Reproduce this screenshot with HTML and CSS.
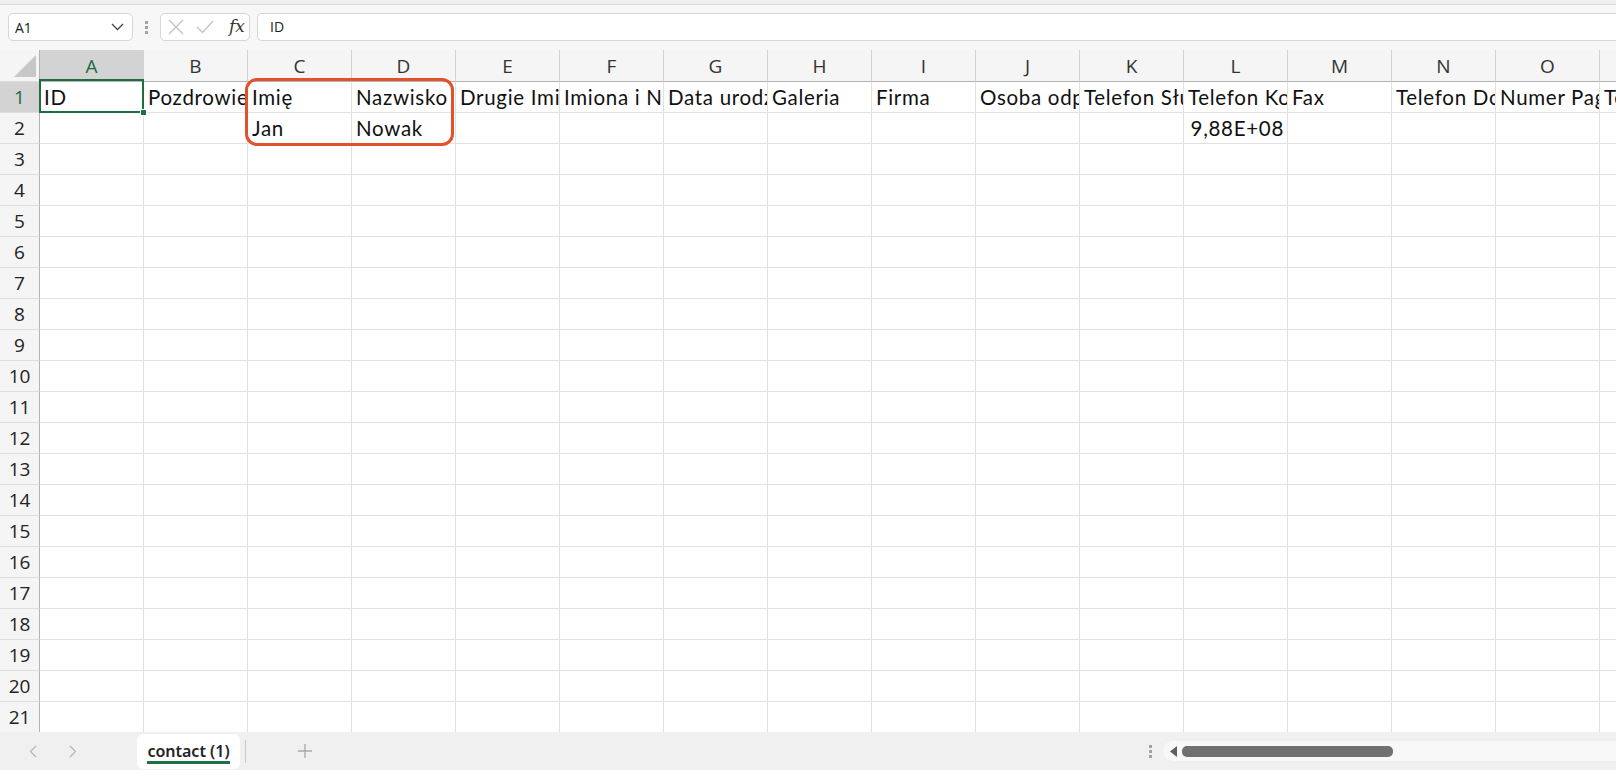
FILE: index.html
```html
<!DOCTYPE html>
<html lang="pl">
<head>
  <meta charset="UTF-8" />
  <title>contact (1)</title>
  <link rel="stylesheet" href="styles.css">
</head>
<body>
  <div class="app">
    <div class="top-strip"></div>

    <!-- Formula bar -->
    <div class="formula-row">
      <div class="name-box">
        <span>A1</span>
        <svg width="13" height="8" viewBox="0 0 13 8"><path d="M1 1l5.5 5.5L12 1" fill="none" stroke="#444" stroke-width="1.3"/></svg>
      </div>
      <div class="grip"><i></i><i></i><i></i></div>
      <div class="fx-buttons">
        <svg width="16" height="16" viewBox="0 0 16 16"><path d="M1 1l14 14M15 1L1 15" stroke="#c4c4c4" stroke-width="1.4"/></svg>
        <svg width="18" height="14" viewBox="0 0 18 14"><path d="M1 7l5.5 5.5L17 1" fill="none" stroke="#c4c4c4" stroke-width="1.4"/></svg>
        <span class="fx">fx</span>
      </div>
      <div class="formula-input">ID</div>
    </div>

    <!-- Grid -->
    <div class="sheet">
      <table class="grid">
        <colgroup>
          <col class="rh"><col><col><col><col><col><col><col><col><col><col><col><col><col><col><col><col>
        </colgroup>
        <tr class="col-heads">
          <th class="corner"><span class="tri"></span></th>
          <th class="active">A</th><th>B</th><th>C</th><th>D</th><th>E</th><th>F</th><th>G</th><th>H</th>
          <th>I</th><th>J</th><th>K</th><th>L</th><th>M</th><th>N</th><th>O</th><th>P</th>
        </tr>
        <tr>
          <th class="active">1</th>
          <td>ID</td><td>Pozdrowienie</td><td>Imię</td><td>Nazwisko</td><td>Drugie Imię</td>
          <td>Imiona i Nazwisko</td><td>Data urodzenia</td><td>Galeria</td><td>Firma</td>
          <td>Osoba odpowiedzialna</td><td>Telefon Służbowy</td><td>Telefon Komórkowy</td><td>Fax</td>
          <td>Telefon Domowy</td><td>Numer Pagera</td><td>Telefon</td>
        </tr>
        <tr>
          <th>2</th>
          <td></td><td></td><td>Jan</td><td>Nowak</td><td></td><td></td><td></td><td></td><td></td>
          <td></td><td></td><td class="num">9,88E+08</td><td></td><td></td><td></td><td></td>
        </tr>
        <tr><th>3</th><td></td><td></td><td></td><td></td><td></td><td></td><td></td><td></td><td></td><td></td><td></td><td></td><td></td><td></td><td></td><td></td></tr>
        <tr><th>4</th><td></td><td></td><td></td><td></td><td></td><td></td><td></td><td></td><td></td><td></td><td></td><td></td><td></td><td></td><td></td><td></td></tr>
        <tr><th>5</th><td></td><td></td><td></td><td></td><td></td><td></td><td></td><td></td><td></td><td></td><td></td><td></td><td></td><td></td><td></td><td></td></tr>
        <tr><th>6</th><td></td><td></td><td></td><td></td><td></td><td></td><td></td><td></td><td></td><td></td><td></td><td></td><td></td><td></td><td></td><td></td></tr>
        <tr><th>7</th><td></td><td></td><td></td><td></td><td></td><td></td><td></td><td></td><td></td><td></td><td></td><td></td><td></td><td></td><td></td><td></td></tr>
        <tr><th>8</th><td></td><td></td><td></td><td></td><td></td><td></td><td></td><td></td><td></td><td></td><td></td><td></td><td></td><td></td><td></td><td></td></tr>
        <tr><th>9</th><td></td><td></td><td></td><td></td><td></td><td></td><td></td><td></td><td></td><td></td><td></td><td></td><td></td><td></td><td></td><td></td></tr>
        <tr><th>10</th><td></td><td></td><td></td><td></td><td></td><td></td><td></td><td></td><td></td><td></td><td></td><td></td><td></td><td></td><td></td><td></td></tr>
        <tr><th>11</th><td></td><td></td><td></td><td></td><td></td><td></td><td></td><td></td><td></td><td></td><td></td><td></td><td></td><td></td><td></td><td></td></tr>
        <tr><th>12</th><td></td><td></td><td></td><td></td><td></td><td></td><td></td><td></td><td></td><td></td><td></td><td></td><td></td><td></td><td></td><td></td></tr>
        <tr><th>13</th><td></td><td></td><td></td><td></td><td></td><td></td><td></td><td></td><td></td><td></td><td></td><td></td><td></td><td></td><td></td><td></td></tr>
        <tr><th>14</th><td></td><td></td><td></td><td></td><td></td><td></td><td></td><td></td><td></td><td></td><td></td><td></td><td></td><td></td><td></td><td></td></tr>
        <tr><th>15</th><td></td><td></td><td></td><td></td><td></td><td></td><td></td><td></td><td></td><td></td><td></td><td></td><td></td><td></td><td></td><td></td></tr>
        <tr><th>16</th><td></td><td></td><td></td><td></td><td></td><td></td><td></td><td></td><td></td><td></td><td></td><td></td><td></td><td></td><td></td><td></td></tr>
        <tr><th>17</th><td></td><td></td><td></td><td></td><td></td><td></td><td></td><td></td><td></td><td></td><td></td><td></td><td></td><td></td><td></td><td></td></tr>
        <tr><th>18</th><td></td><td></td><td></td><td></td><td></td><td></td><td></td><td></td><td></td><td></td><td></td><td></td><td></td><td></td><td></td><td></td></tr>
        <tr><th>19</th><td></td><td></td><td></td><td></td><td></td><td></td><td></td><td></td><td></td><td></td><td></td><td></td><td></td><td></td><td></td><td></td></tr>
        <tr><th>20</th><td></td><td></td><td></td><td></td><td></td><td></td><td></td><td></td><td></td><td></td><td></td><td></td><td></td><td></td><td></td><td></td></tr>
        <tr><th>21</th><td></td><td></td><td></td><td></td><td></td><td></td><td></td><td></td><td></td><td></td><td></td><td></td><td></td><td></td><td></td><td></td></tr>
      </table>

      <!-- overlays: active cell and the annotation frame -->
      <div class="selection"><span class="handle"></span></div>
      <div class="callout"></div>
    </div>

    <!-- Sheet tabs + horizontal scroll -->
    <div class="tab-bar">
      <div class="tab-nav">
        <svg width="8" height="13" viewBox="0 0 8 13"><path d="M7 1L1.5 6.5 7 12" fill="none" stroke="#b5b5b5" stroke-width="1.2"/></svg>
        <svg width="8" height="13" viewBox="0 0 8 13"><path d="M1 1l5.5 5.5L1 12" fill="none" stroke="#b5b5b5" stroke-width="1.2"/></svg>
      </div>
      <div class="sheet-tab"><span>contact (1)</span></div>
      <div class="tab-sep"></div>
      <div class="add-sheet">
        <svg width="16" height="16" viewBox="0 0 16 16"><path d="M8 1v14M1 8h14" stroke="#a8a8a8" stroke-width="1.3"/></svg>
      </div>
      <div class="hscroll">
        <div class="grip small"><i></i><i></i><i></i></div>
        <div class="track">
          <svg width="8" height="11" viewBox="0 0 8 11"><path d="M7 0v11L0 5.5z" fill="#5f5f5f"/></svg>
          <div class="thumb"></div>
        </div>
      </div>
    </div>
  </div>
</body>
</html>
```

FILE: styles.css
```css
/* Base */
* {
  margin: 0;
  padding: 0;
  box-sizing: border-box;
}

body {
  font-family: "Open Sans", "Noto Sans", sans-serif;
  color: #222;
  background: #f5f5f5;
  overflow: hidden;
}

.app {
  width: 1616px;
  height: 770px;
  display: flex;
  flex-direction: column;
  overflow: hidden;
}

.top-strip {
  height: 5px;
  background: #efefef;
  border-bottom: 1px solid #d9d9d9;
}

/* Formula bar */
.formula-row {
  height: 45px;
  display: flex;
  align-items: flex-start;
  padding: 8px 0 0 8px;
  background: #f7f7f7;
}

.name-box {
  width: 125px;
  height: 28px;
  background: #fff;
  border: 1px solid #d6d6d6;
  border-radius: 5px;
  display: flex;
  align-items: center;
  justify-content: space-between;
  padding: 0 8px 0 6px;
  font-size: 14px;
}

.grip {
  width: 27px;
  height: 28px;
  display: flex;
  flex-direction: column;
  align-items: center;
  justify-content: center;
  gap: 2px;
}
.grip i {
  width: 3px;
  height: 3px;
  background: #a3a3a3;
}

.fx-buttons {
  width: 90px;
  height: 28px;
  background: #fff;
  border: 1px solid #d6d6d6;
  border-radius: 5px;
  display: flex;
  align-items: center;
  padding-left: 7px;
  gap: 12px;
}

.fx {
  font-family: "DejaVu Serif", "Liberation Serif", serif;
  font-style: italic;
  font-size: 17px;
  color: #333;
  margin-left: 3px;
  margin-top: -3px;
}

.formula-input {
  flex: 1;
  height: 28px;
  margin-left: 7px;
  background: #fff;
  border: 1px solid #d6d6d6;
  border-right: none;
  border-radius: 5px 0 0 5px;
  padding-left: 12px;
  font-size: 14px;
  line-height: 26px;
}

/* Grid */
.sheet {
  position: relative;
  height: 682px;
  overflow: hidden;
  background: #fff;
}

.grid {
  table-layout: fixed;
  width: 1704px;
  border-collapse: separate;
  border-spacing: 0;
}

.grid col {
  width: 104px;
}
.grid col.rh {
  width: 40px;
}

.grid tr {
  height: 31px;
}

.grid td,
.grid th {
  border-right: 1px solid #e1e1e1;
  border-bottom: 1px solid #e1e1e1;
  white-space: nowrap;
  overflow: hidden;
  font-size: 19px;
  line-height: 30px;
  font-weight: 400;
}

.grid td {
  font-family: Lato, "Open Sans", sans-serif;
  font-size: 20.5px;
  letter-spacing: 0.7px;
  color: #111;
  padding-left: 4px;
  text-align: left;
}

.grid td.num {
  text-align: right;
  padding-right: 3px;
}

.col-heads th {
  background: #f5f5f5;
  color: #333;
  text-align: center;
  border-right-color: #d2d2d2;
  border-bottom-color: #b3b3b3;
  padding-top: 1px;
}

.grid tr > th:first-child {
  background: #f5f5f5;
  color: #222;
  text-align: center;
  border-right-color: #b3b3b3;
  border-bottom-color: #dedede;
}

.grid th.active,
.grid tr > th.active:first-child {
  background: #d3d3d3;
  color: #1d6b3f;
}

.corner {
  position: relative;
}
.tri {
  position: absolute;
  left: 14px;
  top: 5px;
  width: 0;
  height: 0;
  border-left: 22px solid transparent;
  border-bottom: 22px solid #c7c7c7;
}

/* Active cell */
.selection {
  position: absolute;
  left: 39px;
  top: 29px;
  width: 105px;
  height: 34px;
  border: 2px solid #1e6e42;
}
.handle {
  position: absolute;
  right: -5px;
  bottom: -5px;
  width: 7px;
  height: 7px;
  background: #1e6e42;
  border: 1px solid #fff;
}

/* Orange annotation frame */
.callout {
  position: absolute;
  left: 245px;
  top: 28px;
  width: 209px;
  height: 68px;
  border: 3px solid #e2512a;
  border-radius: 12px;
}

/* Tabs */
.tab-bar {
  flex: 1;
  display: flex;
  align-items: center;
  background: #f0f0f0;
}

.tab-nav {
  width: 137px;
  display: flex;
  gap: 32px;
  padding-left: 29px;
}

.sheet-tab {
  width: 103px;
  height: 35px;
  margin-top: 1px;
  background: #fff;
  border-radius: 6px;
  display: flex;
  justify-content: center;
  align-items: center;
  font-family: "Noto Sans", "Open Sans", sans-serif;
  font-size: 16px;
  font-weight: 600;
  color: #242424;
}
.sheet-tab span {
  border-bottom: 3px solid #1e7145;
  line-height: 20px;
  padding-top: 2px;
}

.tab-sep {
  width: 1px;
  height: 23px;
  margin-left: 5px;
  background: #c9c9c9;
}

.add-sheet {
  margin-left: 51px;
  display: flex;
}

.hscroll {
  margin-left: auto;
  display: flex;
  align-items: center;
  width: 478px;
}

.grip.small {
  width: 25px;
  height: 20px;
}

.track {
  flex: 1;
  height: 20px;
  background: #f8f8f8;
  border-radius: 10px 0 0 10px;
  display: flex;
  align-items: center;
  padding-left: 7px;
  gap: 4px;
}

.thumb {
  width: 211px;
  height: 11px;
  border-radius: 5px;
  background: #707070;
}
```
